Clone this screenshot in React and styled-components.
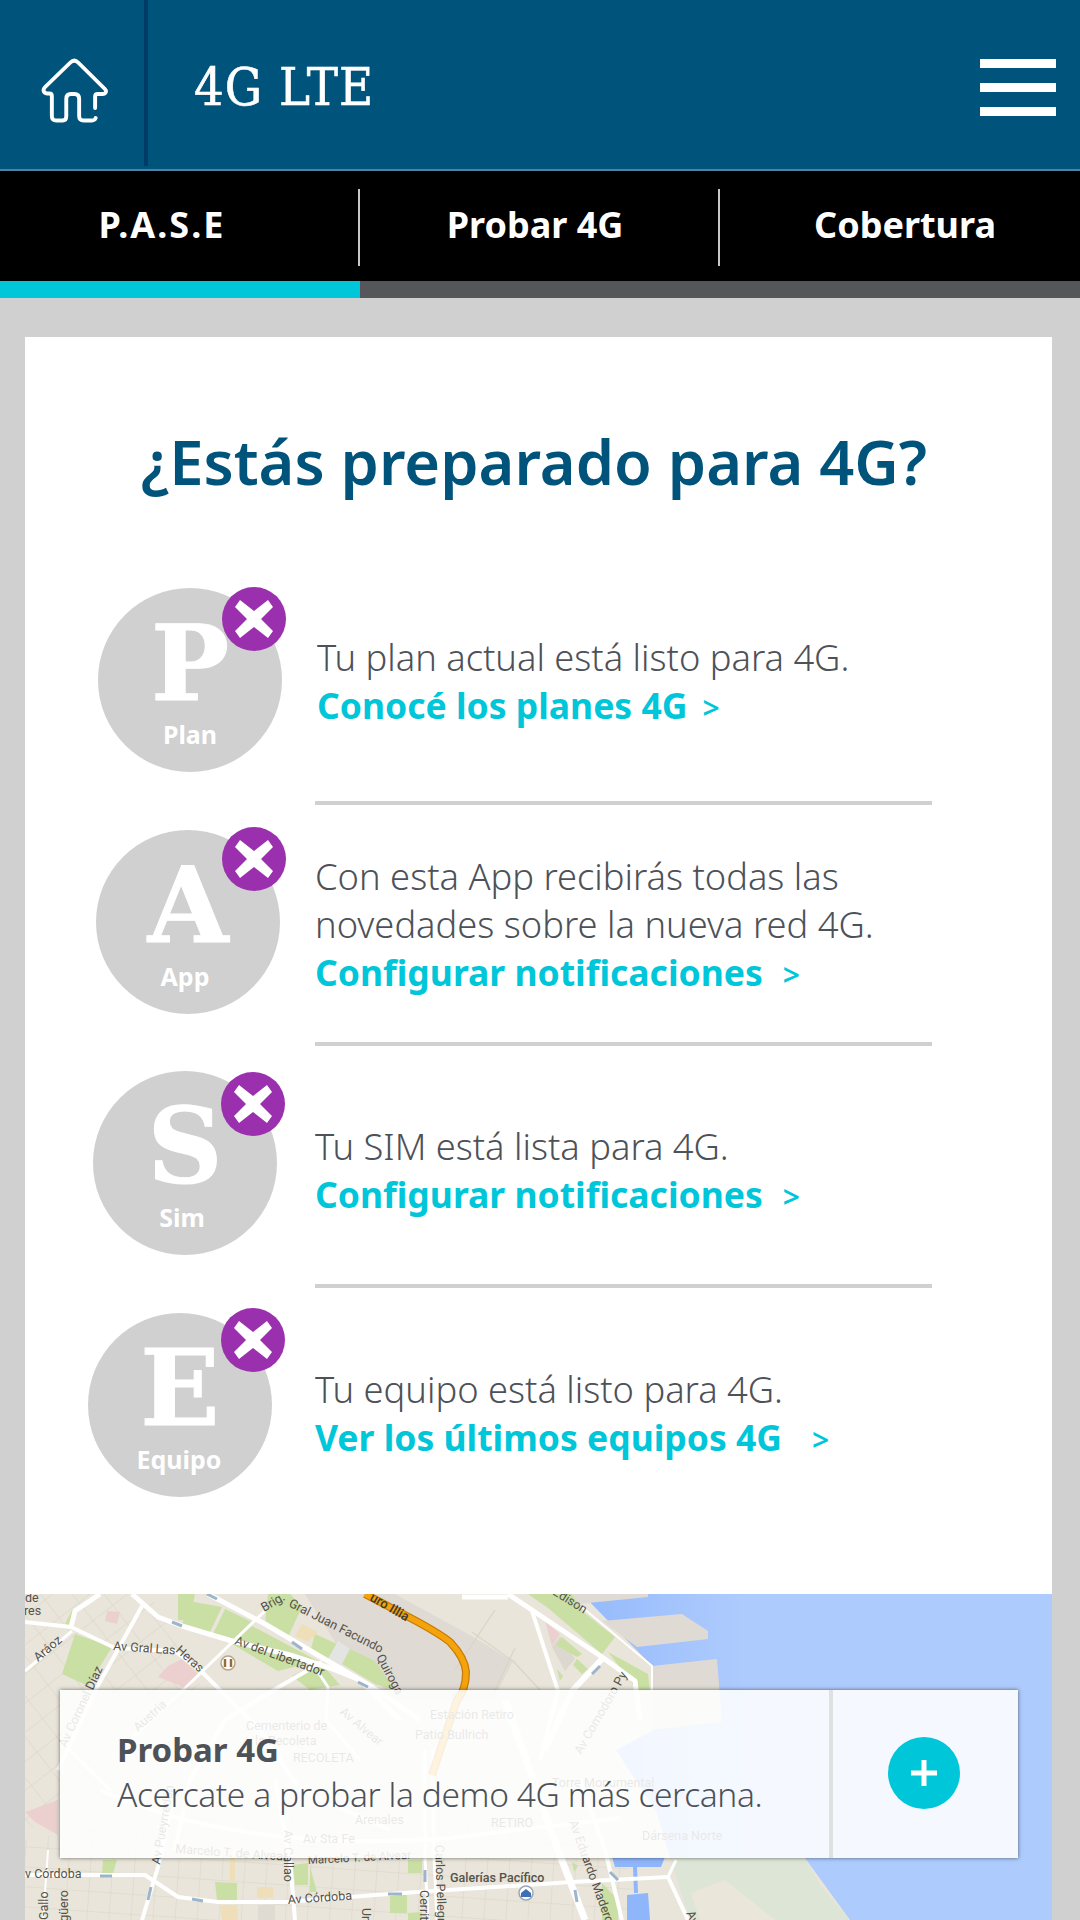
import styled, { createGlobalStyle } from "styled-components";

const GlobalStyle = createGlobalStyle`
  html, body {
    margin: 0;
    padding: 0;
    background: #d0d0d0;
  }
  #root {
    height: 1920px;
    overflow: hidden;
  }
  * {
    box-sizing: border-box;
  }
`;

const SANS = `"Noto Sans", "Open Sans", sans-serif`;
const SLAB = `"DejaVu Serif", "Liberation Serif", serif`;

const Page = styled.div`
  width: 1080px;
  height: 1920px;
  font-family: ${SANS};
  background: #d0d0d0;
`;

const Header = styled.header`
  height: 171px;
  background: #00537a;
  border-bottom: 2px solid #4f82a0;
  display: flex;
  align-items: flex-start;
`;

const HomeCell = styled.div`
  width: 148px;
  height: 166px;
  border-right: 4px solid #003d66;
  display: flex;
  align-items: center;
  justify-content: center;
  padding: 15px 0 0 3px;
`;

const Title = styled.h1`
  margin: 0 0 0 46px;
  font-family: ${SLAB};
  font-weight: 400;
  font-size: 52px;
  letter-spacing: 1px;
  line-height: 175px;
  height: 169px;
  color: #fff;
  font-stretch: condensed;
  -webkit-text-stroke: 0.6px #fff;
  flex: 1;
`;

const Burger = styled.div`
  width: 76px;
  margin: 59px 24px 0 0;
  display: flex;
  flex-direction: column;
  gap: 15px;
  span {
    display: block;
    height: 9px;
    background: #fff;
  }
`;

const Tabs = styled.nav`
  height: 110px;
  background: #000;
  display: grid;
  grid-template-columns: 360px 360px 360px;
  align-items: center;
`;

const Tab = styled.div`
  height: 77px;
  margin-top: 2px;
  border-right: ${(p) => (p.$last ? "none" : "2px solid #c8c8c8")};
  color: #fff;
  font-weight: 700;
  font-size: 36px;
  letter-spacing: ${(p) => p.$spacing || 0}px;
  display: flex;
  align-items: center;
  justify-content: center;
  padding-bottom: 5px;
  padding-left: ${(p) => p.$left || 0}px;
  padding-right: ${(p) => p.$right || 0}px;
`;

const Progress = styled.div`
  height: 17px;
  background: #54565a;
  div {
    width: 360px;
    height: 100%;
    background: #00c6d9;
  }
`;

const Card = styled.main`
  margin: 39px 28px 0 25px;
  height: 1583px;
  background: #fff;
  overflow: hidden;
`;

const Heading = styled.h2`
  margin: 0;
  padding: 82px 9px 0 0;
  height: 227px;
  text-align: center;
  font-size: 61.300px;
  line-height: 84px;
  font-weight: 600;
  color: #00537a;
`;

const Row = styled.div`
  display: flex;
  height: ${(p) => p.$height}px;
`;

const MedalCell = styled.div`
  width: 290px;
  padding-top: ${(p) => p.$top}px;
  padding-left: ${(p) => p.$indent}px;
`;

const Medal = styled.div`
  position: relative;
  width: 184px;
  height: 184px;
  border-radius: 50%;
  background: #d0d0d0;
  color: #fff;
  display: flex;
  flex-direction: column;
  align-items: center;
  padding-top: 37px;
`;

const Letter = styled.div`
  font-family: ${SLAB};
  font-weight: 700;
  font-size: 104px;
  line-height: 78px;
  height: 92px;
  -webkit-text-stroke: 1px #fff;
`;

const MedalLabel = styled.div`
  font-weight: 700;
  font-size: 25px;
  line-height: 34px;
  margin-right: ${(p) => p.$shift || 0}px;
`;

const Badge = styled.div`
  position: absolute;
  left: ${(p) => p.$x}px;
  top: ${(p) => p.$y}px;
  width: 64px;
  height: 64px;
  border-radius: 50%;
  background: #9b30ae;
  display: flex;
  align-items: center;
  justify-content: center;
`;

const TextCell = styled.div`
  width: 617px;
  border-bottom: ${(p) => (p.$last ? "none" : "4px solid #d0d0d0")};
  display: flex;
  flex-direction: column;
  justify-content: center;
  padding-left: ${(p) => p.$indent || 0}px;
  padding-top: ${(p) => p.$nudge || 0}px;
`;

const Copy = styled.div`
  font-size: 36.300px;
  line-height: 48px;
  color: #4d5158;
  font-weight: 300;
`;

const MoreLink = styled.a`
  font-size: 35.500px;
  line-height: 48px;
  color: #00c6d9;
  font-weight: 700;
  white-space: pre;
`;

const Arrow = styled.span`
  font-size: 30px;
  font-weight: 600;
  margin-left: ${(p) => p.$gap}px;
`;

const MapArea = styled.div`
  position: relative;
  height: 326px;
  margin-top: 54px;
  svg {
    display: block;
  }
`;

const DemoBox = styled.div`
  position: absolute;
  left: 35px;
  top: 96px;
  width: 958px;
  height: 168px;
  background: rgba(255, 255, 255, 0.87);
  box-shadow: 0 0 4px rgba(0, 0, 0, 0.55);
  display: flex;
`;

const DemoText = styled.div`
  width: 773px;
  padding: 38px 0 0 57px;
  border-right: 4px solid #e0e0de;
  color: #4d5158;
`;

const DemoTitle = styled.div`
  font-size: 33px;
  line-height: 44px;
  font-weight: 700;
`;

const DemoCopy = styled.div`
  font-size: 33.500px;
  line-height: 44px;
  font-weight: 300;
  letter-spacing: -0.4px;
`;

const DemoAction = styled.div`
  flex: 1;
  display: flex;
  align-items: center;
  justify-content: center;
  padding: 0 3px 2px 0;
`;

const PlusButton = styled.div`
  width: 72px;
  height: 72px;
  border-radius: 50%;
  background: #00c6d9;
  display: flex;
  align-items: center;
  justify-content: center;
`;

function HomeIcon() {
  return (
    <svg width="68" height="66" viewBox="38 58 66 66" preserveAspectRatio="none" fill="none" stroke="#fff" strokeWidth="3.800" strokeLinecap="round" strokeLinejoin="round">
      <path d="M91.5 108V96.5c0-1.5 1-2.5 2.500-2.500h4.500c3.500 0 4.500-3 2.500-5L75 62.500c-2.500-2.500-5-2.500-7.500 0L43 87c-2.500 2.500-2 6 2 6.500h2c1.500 0 2.500 1 2.500 2.500v20c0 3 1.500 4.500 4.500 4.500h6c2.500 0 3.500-1.500 3.500-4V99c0-3 1.500-5 4.500-5h3.500c3 0 4.500 2 4.500 5v17c0 3 1.500 4.500 4.500 4.500h8c2 0 3-1 3.500-2.500" />
    </svg>
  );
}

function CrossIcon() {
  return (
    <svg width="38" height="44" viewBox="0 0 38 44">
      <path d="M5 3L19 14 33 3 38 10 26 22 38 34 33 41 19 30 5 41 0 34 12 22 0 10Z" fill="#fff" />
    </svg>
  );
}

// map data, all in page coordinates
const GREEN = "#c9dfa3";
const PINK = "#ecd0d0";
const TAN = "#eedfb8";
const PORT = "#dfdbd4";
const BASIN = "#8fb6fb";

const AREAS = [
  ["M395 1594 L468 1634 L513 1661 L493 1700 L395 1700 L375 1680 L340 1650 L305 1594Z", PORT],
  ["M568 1594 H648 V1597 L578 1604Z", PORT],
  ["M602 1621 L682 1614 L708 1631 V1639 L637 1647Z", PORT],
  ["M652 1666 L717 1659 L722 1722 L652 1730Z", PORT],
  ["M75 1634 L112 1647 L88 1686 L62 1674Z", GREEN],
  ["M65 1624 L72 1610 L77 1612 L72 1628Z", GREEN],
  ["M178 1594 H195 L190 1620 H178Z", GREEN],
  ["M188 1601 L222 1607 L208 1636 L182 1626Z", GREEN],
  ["M225 1609 L252 1622 L235 1639 L213 1634Z", GREEN],
  ["M268 1594 H290 L302 1607 L288 1637 L265 1624Z", GREEN],
  ["M252 1626 L318 1661 L278 1671 L232 1644Z", GREEN],
  ["M315 1634 L337 1644 L327 1661 L310 1652Z", GREEN],
  ["M350 1649 L375 1661 L395 1690 L375 1684 L342 1664Z", GREEN],
  ["M292 1676 L320 1662 L340 1685 L310 1690Z", GREEN],
  ["M302 1624 L318 1632 L308 1642 L295 1636Z", TAN],
  ["M338 1641 L350 1649 L340 1666 L329 1657Z", "#e4e4e2"],
  ["M168 1666 L182 1659 L198 1674 L188 1689 L158 1677Z", PINK],
  ["M107 1611 L120 1612 L117 1624 L105 1621Z", PINK],
  ["M25 1812 L58 1800 L58 1835 L35 1822Z", PINK],
  ["M528 1594 H572 L582 1611 L615 1637 L602 1654 L548 1608Z", GREEN],
  ["M608 1652 L648 1674 L650 1691 H638Z", GREEN],
  ["M545 1621 L560 1634 L552 1646Z", PINK],
  ["M552 1647 L560 1636 L575 1659 L565 1671Z", "#dcd8cf"],
  ["M562 1637 L582 1654 L577 1657 L556 1645Z", GREEN],
  ["M577 1659 L588 1669 L582 1674 L573 1665Z", GREEN],
  ["M557 1669 L563 1676 L560 1681Z", GREEN],
  ["M103 1860 H117 L113 1873 H102Z", GREEN],
  ["M215 1882 L237 1883 V1900 H217Z", GREEN],
  ["M293 1865 L308 1863 V1885 H295Z", GREEN],
  ["M310 1867 L317 1892 H310Z", GREEN],
  ["M408 1860 H422 V1873 H408Z", GREEN],
  ["M390 1895 H407 V1913 H390Z", GREEN],
  ["M408 1913 L422 1912 V1920 H408Z", GREEN],
  ["M602 1883 L618 1900 V1920 H602Z", GREEN],
  ["M572 1862 L578 1866 L574 1872Z", GREEN],
  ["M257 1887 H273 V1898 H257Z", TAN],
  ["M220 1905 H237 L238 1920 H222Z", TAN],
  ["M230 1858 H235 V1882 H230Z", TAN],
  ["M258 1905 H275 V1920 H258Z", "#dedbd3"],
  ["M612 1857 H665 L661 1867 H615Z", BASIN],
  ["M633 1867 H637 L638 1893 H634Z", BASIN],
  ["M627 1895 L648 1893 L650 1920 H627Z", BASIN],
];

const ROADS = [
  ["M132 1594 L158 1617 L182 1626 L232 1641 L290 1655 L330 1668 L360 1680 L400 1720", 5],
  ["M208 1594 L265 1624 L372 1687 L420 1720", 5],
  ["M25 1622 L71 1627 L115 1648 L175 1651 L202 1672 L260 1730 L300 1790 L390 1830", 4],
  ["M100 1594 L75 1611 L71 1627", 5],
  ["M72 1631 L25 1671", 3],
  ["M142 1606 L95 1691 L58 1770", 4],
  ["M265 1611 L248 1627 L182 1691 L120 1750", 3],
  ["M322 1662 L272 1691 L225 1720 L190 1780 L175 1850", 4],
  ["M318 1672 L328 1687 L326 1720 L360 1760", 3],
  ["M25 1875 H145 L178 1897 L218 1902 L288 1902 L375 1895 L418 1892 L572 1882 L668 1877 L688 1920", 4],
  ["M175 1790 L158 1867 L142 1920", 4],
  ["M60 1740 L110 1790", 3],
  ["M48 1850 L43 1920", 2],
  ["M275 1780 L290 1860 L295 1920", 4],
  ["M425 1750 V1857 L428 1920", 3],
  ["M433 1750 L434 1857 L437 1920", 3],
  ["M100 1790 C200 1835 320 1848 450 1838 L620 1818", 4],
  ["M508 1594 L602 1657 L635 1681 L640 1720", 5],
  ["M532 1611 L558 1691 L540 1760", 4],
  ["M602 1659 L572 1691 L545 1750", 6],
  ["M505 1700 L558 1850 L585 1920", 7],
  ["M580 1780 L605 1850 L622 1920", 4],
  ["M462 1597 H508", 5],
  ["M668 1877 L676 1860", 3],
];

const ARROWS = [
  "M172 1622L182 1626",
  "M207 1594L217 1599",
  "M292 1642L302 1649",
  "M358 1682L368 1687",
  "M100 1876H112",
  "M192 1899L203 1901",
  "M151 1887L148 1900",
  "M388 1894H402",
  "M425 1870V1882",
  "M575 1890L577 1902",
  "M610 1872L618 1880",
  "M592 1674L600 1666",
];

const LABELS = [
  { x: 25, y: 1602, text: "de" },
  { x: 24, y: 1615, text: "res" },
  { x: 38, y: 1662, text: "Aráoz", rotate: -40 },
  { x: 113, y: 1650, text: "Av Gral Las", rotate: 4 },
  { x: 175, y: 1651, text: "Heras", rotate: 42 },
  { x: 264, y: 1612, text: "Brig.", rotate: -30 },
  { x: 288, y: 1606, text: "Gral Juan Facundo", rotate: 27 },
  { x: 376, y: 1657, text: "Quiroga", rotate: 62 },
  { x: 234, y: 1644, text: "Av del Libertador", rotate: 20 },
  { x: 66, y: 1748, text: "Av Coronel Díaz", rotate: -65 },
  { x: 138, y: 1732, text: "Austria", rotate: -42 },
  { x: 246, y: 1730, text: "Cementerio de" },
  { x: 255, y: 1745, text: "la Recoleta" },
  { x: 293, y: 1762, text: "RECOLETA" },
  { x: 430, y: 1719, text: "Estación Retiro" },
  { x: 415, y: 1739, text: "Patio Bullrich" },
  { x: 339, y: 1713, text: "Av Alvear", rotate: 40 },
  { x: 355, y: 1824, text: "Arenales" },
  { x: 303, y: 1843, text: "Av Sta Fe" },
  { x: 642, y: 1840, text: "Dársena Norte" },
  { x: 552, y: 1787, text: "Torre Monumental" },
  { x: 491, y: 1827, text: "RETIRO" },
  { x: 581, y: 1755, text: "Av Comodoro Py", rotate: -60 },
  { x: 25, y: 1878, text: "v Córdoba" },
  { x: 160, y: 1865, text: "Av Pueyrredón", rotate: -80 },
  { x: 175, y: 1853, text: "Marcelo T. de Alvear", rotate: 4 },
  { x: 308, y: 1864, text: "Marcelo T. de Alvear", rotate: -3, size: 11.5 },
  { x: 288, y: 1904, text: "Av Córdoba", rotate: -4 },
  { x: 450, y: 1882, text: "Galerías Pacífico", weight: 500 },
  { x: 435, y: 1845, text: "Carlos Pellegrini", rotate: 88 },
  { x: 420, y: 1890, text: "Cerrito", rotate: 90 },
  { x: 284, y: 1830, text: "Av Callao", rotate: 90 },
  { x: 552, y: 1594, text: "Edison", rotate: 32 },
  { x: 569, y: 1822, text: "Av Eduardo Madero", rotate: 70 },
  { x: 48, y: 1920, text: "Gallo", rotate: -90 },
  { x: 68, y: 1930, text: "Agüero", rotate: -90 },
  { x: 362, y: 1908, text: "Uruguay", rotate: 90 },
  { x: 686, y: 1913, text: "Av", rotate: 65 },
];

const HIGHWAY = "M365 1594 L418 1622 Q440 1634 450 1642 Q465 1658 466 1672 Q466 1690 457 1700 L432 1775";

// static map picture
function CityMap() {
  return (
    <svg width="1027" height="326" viewBox="25 1594 1027 326">
      <defs>
        <pattern id="blocksA" width="25" height="23" patternUnits="userSpaceOnUse" patternTransform="rotate(-38)">
          <path d="M0 0H25M0 0V23" stroke="#d9d4c6" strokeWidth="1" fill="none" />
        </pattern>
        <pattern id="blocksB" width="22" height="20" patternUnits="userSpaceOnUse" patternTransform="rotate(4)">
          <path d="M0 0H22M0 0V20" stroke="#d9d4c6" strokeWidth="1" fill="none" />
        </pattern>
        <linearGradient id="sea" x1="0" x2="1" y1="0" y2="0">
          <stop offset="0.5" stopColor="#8fb6fb" />
          <stop offset="0.7" stopColor="#aecbfd" />
        </linearGradient>
      </defs>
      <rect x="25" y="1594" width="1027" height="326" fill="url(#sea)" />
      <path d="M25 1594 H582 L652 1666 L654 1730 L616 1750 L657 1813 L670 1858 L805 1858 L850 1920 H25Z" fill="#e9e5da" />
      <path d="M25 1594 H150 L175 1640 L210 1700 L120 1800 L25 1830Z" fill="url(#blocksA)" />
      <path d="M25 1840 L200 1810 L430 1810 L620 1830 L640 1920 H25Z" fill="url(#blocksB)" />
      <path d="M670 1858 L805 1858 L820 1885 L850 1920 H690Z" fill="#dde6d6" />
      <path d="M691 1893 L725 1880 L775 1920 H700Z" fill="#ebe6da" />
      {AREAS.map(([d, fill]) => (
        <path key={d} d={d} fill={fill} />
      ))}
      <g fill="none" stroke="#d9d4c6" strokeWidth="1.200">
        <path d="M472 1632 L513 1661 L540 1690" />
        <path d="M495 1610 L455 1670" />
        <path d="M515 1648 L495 1690" />
      </g>
      <path d="M582 1607 L652 1666 V1691" fill="none" stroke="#fff" strokeWidth="2" />
      <g fill="none" stroke="#fff" strokeLinejoin="round">
        {ROADS.map(([d, width]) => (
          <path key={d} d={d} strokeWidth={width} />
        ))}
      </g>
      <g fill="none" stroke="#9db5cc" strokeWidth="3">
        {ARROWS.map((d) => (
          <path key={d} d={d} />
        ))}
      </g>
      <path d={HIGHWAY} fill="none" stroke="#c77a08" strokeWidth="8" strokeLinejoin="round" />
      <path d={HIGHWAY} fill="none" stroke="#f5a30a" strokeWidth="5.500" strokeLinejoin="round" />
      <circle cx="228" cy="1663" r="7" fill="#fff" stroke="#b8a58a" strokeWidth="1.500" />
      <path d="M225 1659v8M231 1659v8" stroke="#9a6b3a" strokeWidth="2.500" />
      <circle cx="526" cy="1893" r="7" fill="#fff" stroke="#98a5b8" strokeWidth="1.500" />
      <path d="M521 1897v-4l5-4 5 4v4z" fill="#3f6fb5" />
      <text x="369" y="1600" fontFamily="Roboto, sans-serif" fontSize="13" fontWeight="500" fill="#3c3a32" transform="rotate(30 369 1600)">uro Illia</text>
      {LABELS.map((l) => (
        <text
          key={l.text + l.x}
          x={l.x}
          y={l.y}
          fontFamily="Roboto, sans-serif"
          fontSize={l.size || 12.5}
          fontWeight={l.weight || 400}
          fill="#55524a"
          transform={l.rotate ? `rotate(${l.rotate} ${l.x} ${l.y})` : undefined}
        >
          {l.text}
        </text>
      ))}
    </svg>
  );
}

const ITEMS = [
  {
    letter: "P",
    label: "Plan",
    height: 241,
    top: 24,
    indent: 73,
    badge: [124, -1],
    textIndent: 2,
    lines: ["Tu plan actual está listo para 4G."],
    link: "Conocé los planes 4G",
    gap: 15,
  },
  {
    letter: "A",
    label: "App",
    height: 241,
    top: 25,
    indent: 71,
    badge: [126, -3],
    nudge: 4,
    labelShift: 6,
    lines: ["Con esta App recibirás todas las", "novedades sobre la nueva red 4G."],
    link: "Configurar notificaciones",
    gap: 20,
  },
  {
    letter: "S",
    label: "Sim",
    height: 242,
    top: 25,
    indent: 68,
    badge: [128, 1],
    nudge: 13,
    labelShift: 6,
    lines: ["Tu SIM está lista para 4G."],
    link: "Configurar notificaciones",
    gap: 20,
  },
  {
    letter: "E",
    label: "Equipo",
    height: 252,
    top: 25,
    indent: 63,
    badge: [133, -5],
    nudge: 1,
    labelShift: 2,
    last: true,
    lines: ["Tu equipo está listo para 4G."],
    link: "Ver los últimos equipos 4G",
    gap: 30,
  },
];

export default function App() {
  return (
    <Page>
      <GlobalStyle />
      <Header>
        <HomeCell>
          <HomeIcon />
        </HomeCell>
        <Title>4G LTE</Title>
        <Burger>
          <span />
          <span />
          <span />
        </Burger>
      </Header>
      <Tabs>
        <Tab $right={34} $spacing={2}>P.A.S.E</Tab>
        <Tab $right={8}>Probar 4G</Tab>
        <Tab $last $left={10}>Cobertura</Tab>
      </Tabs>
      <Progress>
        <div />
      </Progress>
      <Card>
        <Heading>¿Estás preparado para 4G?</Heading>
        {ITEMS.map((item) => (
          <Row key={item.letter} $height={item.height}>
            <MedalCell $top={item.top} $indent={item.indent}>
              <Medal>
                <Letter>{item.letter}</Letter>
                <MedalLabel $shift={item.labelShift}>{item.label}</MedalLabel>
                <Badge $x={item.badge[0]} $y={item.badge[1]}>
                  <CrossIcon />
                </Badge>
              </Medal>
            </MedalCell>
            <TextCell $last={item.last} $indent={item.textIndent} $nudge={item.nudge}>
              {item.lines.map((line) => (
                <Copy key={line}>{line}</Copy>
              ))}
              <MoreLink>
                {item.link}
                <Arrow $gap={item.gap}>&gt;</Arrow>
              </MoreLink>
            </TextCell>
          </Row>
        ))}
        <MapArea>
          <CityMap />
          <DemoBox>
            <DemoText>
              <DemoTitle>Probar 4G</DemoTitle>
              <DemoCopy>Acercate a probar la demo 4G más cercana.</DemoCopy>
            </DemoText>
            <DemoAction>
              <PlusButton>
                <svg width="26" height="26" viewBox="0 0 26 26">
                  <path d="M10.500 0h5v10.500H26v5H15.500V26h-5V15.500H0v-5h10.500z" fill="#fff" />
                </svg>
              </PlusButton>
            </DemoAction>
          </DemoBox>
        </MapArea>
      </Card>
    </Page>
  );
}
